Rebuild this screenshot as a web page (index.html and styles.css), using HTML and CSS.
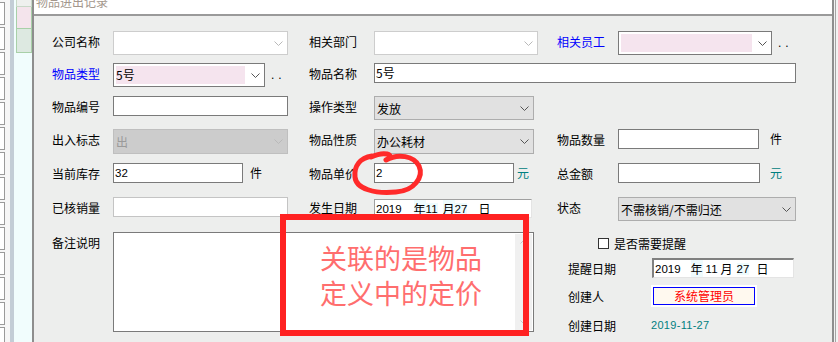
FILE: index.html
```html
<!DOCTYPE html>
<html lang="zh-CN">
<head>
  <meta charset="UTF-8" />
  <title>物品进出记录</title>
  <link rel="stylesheet" href="styles.css">
</head>
<body>
  <div class="screen">
    <div class="side">
      <div class="side-rows">
        <div class="side-top"></div>
        <div class="side-cell"></div><div class="side-cell"></div><div class="side-cell"></div>
        <div class="side-cell"></div><div class="side-cell"></div><div class="side-cell"></div>
        <div class="side-cell"></div><div class="side-cell"></div><div class="side-cell"></div>
        <div class="side-cell"></div><div class="side-cell"></div><div class="side-cell"></div>
        <div class="side-cell"></div><div class="side-cell"></div>
      </div>
      <div class="side-bar"></div>
      <div class="side-panel">
        <div class="chip chip-top"></div>
        <div class="chip chip-pink"></div>
        <div class="chip chip-green"></div>
      </div>
    </div>

    <div class="dialog">
      <div class="title"><span>物品进出记录</span></div>
      <div class="form">
        <!-- row 1 -->
        <div class="lbl">公司名称</div>
        <div class="cell"><div class="combo white w175"><span class="val"></span><svg class="chev" viewBox="0 0 9 5"><path d="M0.5 0.5 L4.5 4.5 L8.5 0.5"/></svg></div></div>
        <div class="lbl">相关部门</div>
        <div class="cell"><div class="combo white w164"><span class="val"></span><svg class="chev" viewBox="0 0 9 5"><path d="M0.5 0.5 L4.5 4.5 L8.5 0.5"/></svg></div></div>
        <div class="lbl blue">相关员工</div>
        <div class="cell"><div class="combo pick w154"><span class="fill w131"></span><svg class="chev" viewBox="0 0 9 5"><path d="M0.5 0.5 L4.5 4.5 L8.5 0.5"/></svg></div><span class="dots">..</span></div>

        <!-- row 2 -->
        <div class="lbl blue">物品类型</div>
        <div class="cell"><div class="combo pick w152"><span class="fill w129">5号</span><svg class="chev" viewBox="0 0 9 5"><path d="M0.5 0.5 L4.5 4.5 L8.5 0.5"/></svg></div><span class="dots">..</span></div>
        <div class="lbl">物品名称</div>
        <div class="cell wide"><div class="box w422">5号</div></div>

        <!-- row 3 -->
        <div class="lbl">物品编号</div>
        <div class="cell"><div class="box w175"></div></div>
        <div class="lbl">操作类型</div>
        <div class="cell"><div class="combo w160"><span class="val">发放</span><svg class="chev" viewBox="0 0 9 5"><path d="M0.5 0.5 L4.5 4.5 L8.5 0.5"/></svg></div></div>
        <div class="lbl"></div>
        <div class="cell"></div>

        <!-- row 4 -->
        <div class="lbl">出入标志</div>
        <div class="cell"><div class="combo off w175"><span class="val">出</span><svg class="chev" viewBox="0 0 9 5"><path d="M0.5 0.5 L4.5 4.5 L8.5 0.5"/></svg></div></div>
        <div class="lbl">物品性质</div>
        <div class="cell"><div class="combo tall w160"><span class="val">办公耗材</span><svg class="chev" viewBox="0 0 9 5"><path d="M0.5 0.5 L4.5 4.5 L8.5 0.5"/></svg></div></div>
        <div class="lbl">物品数量</div>
        <div class="cell"><div class="box w141"></div><span class="unit gap11">件</span></div>

        <!-- row 5 -->
        <div class="lbl">当前库存</div>
        <div class="cell"><div class="box num w130">32</div><span class="unit">件</span></div>
        <div class="lbl">物品单价</div>
        <div class="cell"><div class="box num w140">2</div><span class="unit teal gap3">元</span></div>
        <div class="lbl">总金额</div>
        <div class="cell"><div class="box w142"></div><span class="unit teal gap10">元</span></div>

        <!-- row 6 -->
        <div class="lbl">已核销量</div>
        <div class="cell"><div class="box soft w175"></div></div>
        <div class="lbl">发生日期</div>
        <div class="cell"><div class="date w158 low">
          <span class="d-num">2019</span><span class="d-cjk hl" style="margin-left:12px">年</span><span class="d-num hl">11</span><span class="d-cjk hl" style="margin-left:5px">月</span><span class="d-num hl">27</span><span class="d-cjk" style="margin-left:11px">日</span>
        </div></div>
        <div class="lbl">状态</div>
        <div class="cell"><div class="combo w178"><span class="val">不需核销/不需归还</span><svg class="chev" viewBox="0 0 9 5"><path d="M0.5 0.5 L4.5 4.5 L8.5 0.5"/></svg></div></div>

        <!-- row 7 -->
        <div class="lbl">备注说明</div>
        <div class="memo">
          <div class="scroll">
            <svg class="arrow" viewBox="0 0 7 4"><path d="M0.5 3.5 L3.5 0.5 L6.5 3.5"/></svg>
            <svg class="arrow" viewBox="0 0 7 4"><path d="M0.5 0.5 L3.5 3.5 L6.5 0.5"/></svg>
          </div>
        </div>
        <div class="extra">
          <div class="check-row"><span class="check"></span>是否需要提醒</div>
          <div class="info r-remind">
            <span class="lbl2">提醒日期</span>
            <div class="date deep w142">
              <span class="d-num">2019</span><span class="d-cjk hl" style="margin-left:10px">年</span><span class="d-num" style="margin-left:3px">11</span><span class="d-cjk" style="margin-left:3px">月</span><span class="d-num hl" style="margin-left:4px">27</span><span class="d-cjk" style="margin-left:7px">日</span>
            </div>
          </div>
          <div class="info r-creator">
            <span class="lbl2 short">创建人</span>
            <div class="creator"><div class="creator-in">系统管理员</div></div>
          </div>
          <div class="info r-created">
            <span class="lbl2 short">创建日期</span>
            <span class="stamp">2019-11-27</span>
          </div>
        </div>
      </div>
    </div>
    <div class="edge"></div>

    <!-- annotation drawn over the form -->
    <div class="mark-box">关联的是物品<br>定义中的定价</div>
    <svg class="mark-ring" viewBox="0 0 838 342">
      <path d="M371 157 C384 151 396 154 386 160 C398 153 414 156 419 166 C424 177 414 191 396 192 C375 194 356 189 355 177 C354 166 360 158 372 156"/>
    </svg>
  </div>
</body>
</html>
```

FILE: styles.css
```css
* { box-sizing: border-box; }
body {
  margin: 0; width: 838px; height: 342px; overflow: hidden; background: #fff;
  font-family: "Noto Sans CJK SC", "Liberation Sans", sans-serif;
  font-size: 12px; color: #000;
}
.screen { display: flex; height: 342px; position: relative; }

/* left strip of the parent window */
.side { width: 32px; flex: none; display: flex; background: #f6f6f6; }
.side-rows { width: 5px; display: flex; flex-direction: column; gap: 2px; }
.side-top { height: 5px; background: #d8d8f2; }
.side-cell { height: 23px; flex: none; background: #fff; border: 1px solid #9a9a9a; border-left: none; }
.side-bar { width: 4px; margin-left: 5px; background: #c3cdd6; }
.side-panel { flex: 1; background: #f1fdfd; padding-left: 2px; display: flex; flex-direction: column; }
.chip { border: 1px solid #a8d0a8; border-top: none; }
.chip-top { height: 7px; background: #eef0ee; border-color: #c8d8c8; }
.chip-pink { height: 22px; background: #f4e4ec; }
.chip-green { height: 24px; background: #dde9e1; }

.edge {
  flex: 1;
  background: linear-gradient(to right, #f2f2f2 1px, #a4a4a4 1px, #a4a4a4 2px, #f2f2f2 2px);
}

/* dialog */
.dialog {
  width: 802px; flex: none; display: flex; flex-direction: column;
  border-left: 2px solid #8e8e8e; border-right: 2px solid #8e8e8e;
  background: #edeeed;
}
.title { height: 16px; background: #fff; border-bottom: 2px solid #9a9a9a; padding-left: 2px; }
.title span { display: block; margin-top: -5px; line-height: 14px; color: #a3978c; }

.form {
  display: grid;
  grid-template-columns: 61px 196px 65px 183px 61px 182px;
  grid-template-rows: 32px 33px 33px 34px 34px 35px 110px;
  padding: 15px 0 0 18px;
}
.lbl { line-height: 21px; white-space: nowrap; }
.blue { color: #0000ff; }
.cell { display: flex; align-items: flex-start; }
.wide { grid-column: 4 / 7; }

.w130 { width: 130px; } .w140 { width: 140px; } .w141 { width: 141px; } .w142 { width: 142px; }
.w152 { width: 152px; } .w154 { width: 154px; } .w158 { width: 158px; } .w160 { width: 160px; }
.w164 { width: 164px; } .w175 { width: 175px; } .w178 { width: 178px; } .w422 { width: 422px; }
.w129 { width: 129px; } .w131 { width: 131px; }

/* text boxes */
.box {
  height: 20px; background: #fff; border: 1px solid #7a7a7a;
  padding-left: 1px; line-height: 18px; white-space: nowrap;
}
.box.soft { border-color: #c4c4c4; }
.box.num { font-family: "Liberation Sans", sans-serif; font-size: 11.5px; }
.unit { margin-left: 7px; line-height: 20px; }
.gap3 { margin-left: 3px; } .gap10 { margin-left: 10px; } .gap11 { margin-left: 11px; }
.teal { color: #008080; }

/* combo boxes */
.combo {
  height: 24px; display: flex; align-items: center;
  background: #e1e1e1; border: 1px solid #adadad; padding: 0 4px 0 2px;
}
.combo.tall { height: 25px; }
.combo .val { flex: 1; white-space: nowrap; }
.combo.white { background: #fff; border-color: #cdcdcd; }
.combo.off { height: 25px; background: #cccccc; border-color: #bfbfbf; color: #9a9a9a; }
.combo.pick { background: #fff; border-color: #7a7a7a; padding: 2px 4px 2px 2px; align-items: stretch; }
.pick .fill { background: #f5e4ee; line-height: 18px; margin-right: auto; }
.pick .chev { align-self: center; }
.chev { width: 9px; height: 5px; flex: none; margin-left: auto; }
.chev path { fill: none; stroke: #555; stroke-width: 1; }
.white .chev path, .off .chev path { stroke: #b9b9b9; }
.dots {
  margin-left: 6px; line-height: 24px; letter-spacing: 4px;
  font-family: "Liberation Sans", sans-serif;
}

/* date pickers */
.date {
  height: 19px; display: flex; align-items: center; background: #fff;
  border: 1px solid; border-color: #a0a0a0 #e4e4e4 #e4e4e4 #a0a0a0; padding-left: 1px;
}
.date.low { margin-top: 2px; }
.date.deep { border-width: 2px 1px 1px 2px; border-color: #808080 #e4e4e4 #e4e4e4 #808080; height: 20px; padding-left: 1px; }
.d-num { font-family: "Liberation Sans", sans-serif; font-size: 11.5px; }
.d-cjk { font-size: 12px; }
.hl { background: #eefbfd; }

/* memo */
.memo {
  grid-column: 2 / 5; width: 421px; height: 100px;
  background: #fff; border: 1px solid #7a7a7a; padding: 1px;
  display: flex; justify-content: flex-end;
}
.scroll {
  width: 17px; background: #f0f0f0; display: flex; flex-direction: column;
  justify-content: space-between; align-items: center; padding: 6px 0;
}
.arrow { width: 7px; height: 4px; }
.arrow path { fill: none; stroke: #c4c4c4; stroke-width: 1; }

/* right lower block */
.extra { grid-column: 5 / 7; padding-left: 11px; display: flex; flex-direction: column; }
.check-row { margin: 5px 0 0 30px; height: 13px; display: flex; align-items: center; white-space: nowrap; }
.check { width: 11px; height: 11px; border: 1px solid #333; background: #fff; margin-right: 5px; }
.info { display: flex; align-items: center; }
.lbl2 { width: 84px; flex: none; }
.lbl2.short { width: 83px; }
.r-remind { margin-top: 8px; height: 20px; }
.r-creator { margin-top: 7px; height: 22px; }
.r-created { margin-top: 8px; height: 20px; }
.creator { width: 106px; height: 22px; border: 2px solid #fff; }
.creator-in {
  height: 100%; border: 1px solid #0000ff; background: #fff9ef;
  color: #ff0000; text-align: center; line-height: 16px;
}
.stamp { color: #008080; font-family: "Liberation Sans", sans-serif; font-size: 11px; letter-spacing: 0.3px; }

/* annotation overlay */
.mark-box {
  position: absolute; left: 280px; top: 214px; width: 249px; height: 122px;
  border: 6px solid #ff2222; padding: 20px 0 0 34px;
  font-size: 27px; line-height: 35px; color: #ff6e6e; white-space: nowrap;
}
.mark-ring { position: absolute; left: 0; top: 0; width: 838px; height: 342px; pointer-events: none; }
.mark-ring path { fill: none; stroke: #ff2a2a; stroke-width: 5; stroke-linecap: round; stroke-linejoin: round; }
```
